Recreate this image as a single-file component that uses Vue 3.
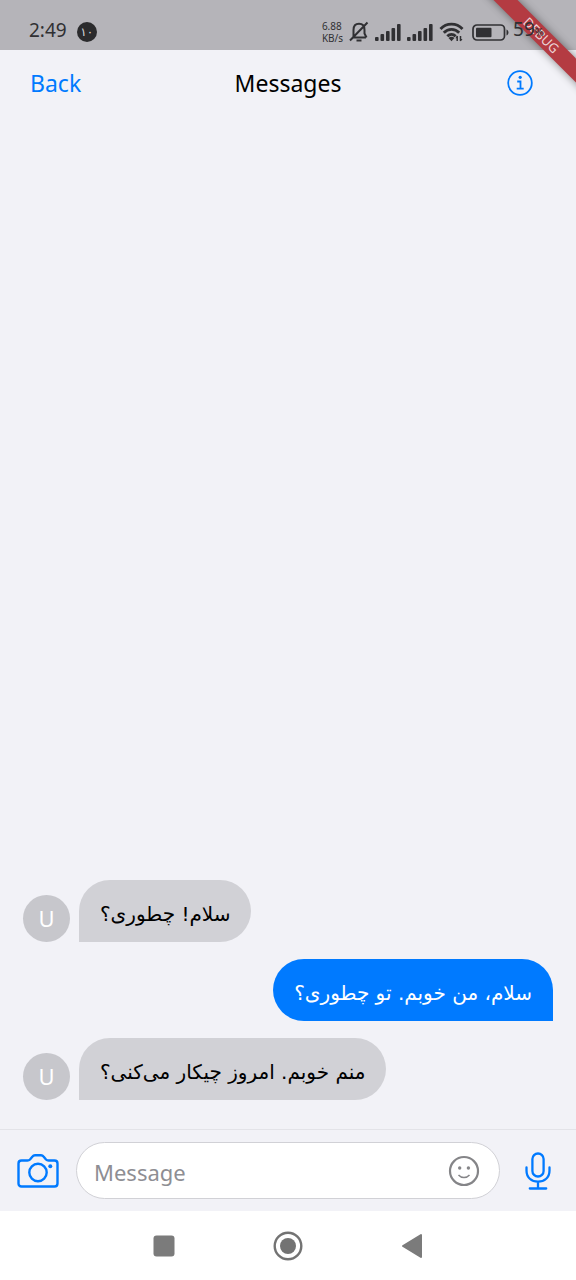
<script setup>
import { ref } from 'vue'

const draft = ref('')
const messages = [
  { id: 1, mine: false, text: 'سلام! چطوری؟' },
  { id: 2, mine: true, text: 'سلام، من خوبم. تو چطوری؟' },
  { id: 3, mine: false, text: 'منم خوبم. امروز چیکار می‌کنی؟' },
]
const bars = [4, 7, 10, 13, 17]
</script>

<template>
  <div class="screen">
    <div class="status">
      <span class="clock">2:49</span>
      <span class="badge">۱۰</span>
      <div class="indicators">
        <div class="speed"><span>6.88</span><span>KB/s</span></div>
        <svg class="bell" width="20" height="22" viewBox="0 0 20 22" fill="none" stroke="#303033" stroke-width="2">
          <path d="M3.5 16.5h13.5M4.5 16V9c0-4 2-6.200 5.500-6.200S15.500 5 15.500 9v3.500l2 4M1 19.500 18.500 1.500" />
          <path d="M7.500 19.500h5" />
        </svg>
        <svg v-for="n in 2" :key="n" class="signal" width="26" height="18" viewBox="0 0 26 18" fill="#303033">
          <rect v-for="(h, i) in bars" :key="i" :x="i * 5.5" :y="18 - h" width="3.600" :height="h" rx="1" />
        </svg>
        <svg class="wifi" width="25" height="20" viewBox="0 0 25 20" fill="none" stroke="#303033" stroke-width="2.800">
          <path d="M1.500 7C7.500.5 17.500.5 23.500 7M4.800 10.800c4.300-4.600 11.100-4.600 15.400 0M8.300 14.300c2.500-2.500 5.900-2.500 8.400 0" />
          <path d="m9.500 16 3 3.200 3-3.200c-1.800-1.600-4.200-1.600-6 0Z" fill="#303033" stroke="none" />
          <path d="M18.200 14v5M21.500 14v5" stroke-width="1.500" />
          <path d="m16.300 16.300 1.900-2.600v2.600ZM21.500 17h2l-2 2.500Z" fill="#303033" stroke="none" />
        </svg>
        <svg class="battery" width="37" height="17" viewBox="0 0 37 17">
          <rect x="1" y="1" width="31.500" height="15" rx="4" fill="none" stroke="#303033" stroke-width="1.700" />
          <rect x="4" y="3.800" width="15.500" height="9.400" rx="1" fill="#303033" />
          <path d="M34.500 5.500c2.600 1 2.600 5 0 6Z" fill="#303033" />
        </svg>
        <span class="percent">59<small>%</small></span>
      </div>
    </div>
    <div class="debug">DEBUG</div>

    <header class="topbar">
      <button class="back" type="button">Back</button>
      <h1>Messages</h1>
      <button class="info" type="button" aria-label="Info">
        <svg width="26" height="26" viewBox="0 0 26 26" fill="none" stroke="#007aff" stroke-width="1.800">
          <circle cx="13" cy="13" r="11.800" />
          <path d="M10.200 11.500h3.300v7M9.700 18.700h7" />
          <circle cx="13.200" cy="7.300" r="1.600" fill="#007aff" stroke="none" />
        </svg>
      </button>
    </header>

    <main class="chat">
      <div v-for="m in messages" :key="m.id" class="row" :class="{ mine: m.mine }">
        <span v-if="!m.mine" class="avatar">U</span>
        <p class="bubble" dir="rtl" lang="fa">{{ m.text }}</p>
      </div>
    </main>

    <form class="composer" @submit.prevent>
      <button type="button" aria-label="Camera">
        <svg width="42" height="34" viewBox="0 0 42 34" fill="none" stroke="#007aff" stroke-width="2.400" stroke-linejoin="round">
          <path d="M4.500 6.500h6c1 0 1.800-.3 2.500-1l2.500-3c.6-.8 1.300-1.200 2.500-1.200h6c1.200 0 1.900.4 2.500 1.200l2.500 3c.7.7 1.500 1 2.500 1H37.500c1.800 0 3 1.200 3 3V29.500c0 1.800-1.200 3-3 3H4.500c-1.800 0-3-1.200-3-3V9.500c0-1.800 1.200-3 3-3Z" />
          <circle cx="21" cy="18.500" r="8.700" />
          <circle cx="33.300" cy="12.200" r="2" fill="#007aff" stroke="none" />
        </svg>
      </button>
      <div class="field">
        <input v-model="draft" type="text" placeholder="Message" aria-label="Message">
        <button type="button" aria-label="Emoji">
          <svg width="32" height="32" viewBox="0 0 32 32" fill="none" stroke="#858588" stroke-width="2.200">
            <circle cx="16" cy="16" r="14" />
            <circle cx="11.700" cy="13" r="1.700" fill="#858588" stroke="none" />
            <circle cx="20.400" cy="13" r="1.700" fill="#858588" stroke="none" />
            <path d="M10.500 20c3 3.400 8 3.400 11 0" stroke-width="1.500" />
          </svg>
        </button>
      </div>
      <button class="mic" type="button" aria-label="Voice message">
        <svg width="26" height="38" viewBox="0 0 26 38" fill="none" stroke="#007aff" stroke-width="2.300" stroke-linecap="round">
          <rect x="7.400" y="1.500" width="11.200" height="23" rx="5.600" />
          <path d="M1.500 15.500v3c0 7 5 11.200 11.500 11.200s11.500-4.200 11.500-11.200v-3M13 30v6.300M4.800 36.500h16.400" />
        </svg>
      </button>
    </form>

    <nav class="system">
      <button type="button" aria-label="Recent apps">
        <svg width="30" height="30" viewBox="0 0 30 30"><rect x="4.500" y="4.500" width="21" height="21" rx="3" fill="#7b7b7b" /></svg>
      </button>
      <button type="button" aria-label="Home">
        <svg width="30" height="30" viewBox="0 0 30 30"><circle cx="15" cy="15" r="13.300" fill="none" stroke="#737373" stroke-width="2.400" /><circle cx="15" cy="15" r="8" fill="#737373" /></svg>
      </button>
      <button type="button" aria-label="Go back">
        <svg width="30" height="30" viewBox="0 0 30 30"><path d="M6 15 24 4v22Z" fill="#7b7b7b" stroke="#7b7b7b" stroke-width="2" stroke-linejoin="round" /></svg>
      </button>
    </nav>
  </div>
</template>

<style>
body { margin: 0; }
</style>

<style scoped>
.screen {
  position: relative;
  display: flex;
  flex-direction: column;
  min-height: 100vh;
  overflow: hidden;
  background: #f2f2f7;
  color: #000;
  font-family: "Noto Sans", "DejaVu Sans", sans-serif;
}
button {
  display: flex;
  padding: 0;
  border: 0;
  background: none;
  font: inherit;
}
svg { display: block; flex: none; }
.status {
  display: flex;
  align-items: center;
  box-sizing: border-box;
  height: 50px;
  padding: 14px 32px 0 29px;
  background: #b5b4b9;
  color: #303033;
}
.clock { font-size: 19px; line-height: 24px; margin-bottom: 4px; }
.badge {
  width: 20px;
  height: 20px;
  margin-left: 10px;
  border-radius: 50%;
  background: #2b2b2d;
  color: #d5d5d8;
  font-size: 12px;
  line-height: 20px;
  text-align: center;
}
.indicators {
  position: relative;
  z-index: 2;
  display: flex;
  align-items: center;
  margin-left: auto;
}
.speed {
  display: flex;
  flex-direction: column;
  font-size: 10px;
  line-height: 12px;
}
.bell { margin-left: 6px; }
.signal { margin-left: 6px; }
.wifi { margin-left: 6px; }
.battery { margin-left: 8px; }
.percent { margin: 0 0 4px 4px; font-size: 19px; line-height: 24px; }
.percent small { font-size: 11px; }
.debug {
  position: absolute;
  z-index: 1;
  top: 27px;
  right: -35px;
  width: 140px;
  height: 17px;
  background: #b43b42;
  box-shadow: 0 0 8px rgba(0, 0, 0, 0.45);
  color: #ecd5d8;
  font-size: 13px;
  line-height: 17px;
  text-align: center;
  transform: rotate(45deg);
}
.topbar {
  display: grid;
  grid-template-columns: 1fr auto 1fr;
  align-items: center;
  height: 66px;
  padding: 0 30px;
  font-size: 23px;
}
.topbar h1 { margin: 0; font-size: 23px; font-weight: 400; }
.back { justify-self: start; color: #007aff; }
.info { justify-self: end; margin-right: 13px; }
.chat {
  display: flex;
  flex: 1;
  flex-direction: column;
  justify-content: flex-end;
  gap: 17px;
  padding: 0 23px 29px;
}
.row { display: flex; align-items: flex-end; gap: 9px; }
.row.mine { justify-content: flex-end; }
.avatar {
  width: 47px;
  height: 47px;
  border-radius: 50%;
  background: #c7c7cc;
  color: #fff;
  font-size: 22px;
  line-height: 47px;
  text-align: center;
}
.bubble {
  margin: 0;
  padding: 18px 21px 12px;
  border-radius: 31px 31px 31px 0;
  background: #d1d1d6;
  font-family: "DejaVu Sans", sans-serif;
  font-size: 20px;
  line-height: 32px;
}
.mine .bubble {
  border-radius: 31px 31px 0 31px;
  background: #007aff;
  color: #fff;
}
.composer {
  display: flex;
  align-items: center;
  gap: 17px;
  padding: 12px 25px 12px 17px;
  border-top: 1px solid #e3e3e8;
}
.field {
  display: flex;
  flex: 1;
  align-items: center;
  box-sizing: border-box;
  min-width: 0;
  height: 57px;
  padding: 0 19px 0 17px;
  border: 1px solid #d1d1d6;
  border-radius: 29px;
  background: #fff;
}
.field input {
  flex: 1;
  min-width: 0;
  padding: 2px 0 0;
  border: 0;
  outline: 0;
  background: none;
  font-family: inherit;
  font-size: 22px;
  line-height: 32px;
}
.field input::placeholder { color: #8e8e93; opacity: 1; }
.mic { margin-left: 8px; }
.system {
  display: flex;
  align-items: center;
  justify-content: center;
  gap: 94px;
  height: 69px;
  background: #fff;
}
</style>
